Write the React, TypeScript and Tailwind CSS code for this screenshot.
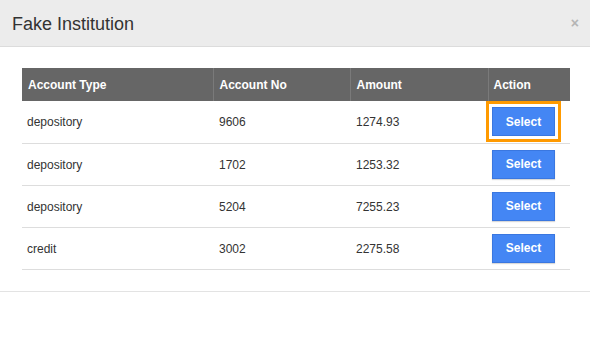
const accounts = [
  { type: "depository", no: "9606", amount: "1274.93", focused: true },
  { type: "depository", no: "1702", amount: "1253.32" },
  { type: "depository", no: "5204", amount: "7255.23" },
  { type: "credit", no: "3002", amount: "2275.58" },
];

export default function App() {
  return (
    <div className="w-[590px] h-[339px] bg-white font-['Liberation_Sans',Arial,sans-serif] text-[#333]">
      <div className="h-[47px] bg-[#ececec] border-b border-[#dcdcdc] flex items-center justify-between pl-3 pr-[11px]">
        <h4 className="text-[18px] leading-none text-[#333] mt-[1px]">Fake Institution</h4>
        <button className="text-[14px] font-bold leading-none text-[#b5b5b5]">×</button>
      </div>

      <div className="px-[22px] pt-[21px] pb-[21px] border-b border-[#e3e3e3]">
        <table className="w-[548px] border-collapse table-fixed text-[12px]">
          <colgroup>
            <col className="w-[191px]" />
            <col className="w-[137px]" />
            <col className="w-[138px]" />
            <col className="w-[82px]" />
          </colgroup>
          <thead>
            <tr className="h-[33px] bg-[#666] text-white font-bold text-left">
              <th className="px-[6px] font-bold">Account Type</th>
              <th className="px-[6px] font-bold border-l border-[#7a7a7a]">Account No</th>
              <th className="px-[6px] font-bold border-l border-[#7a7a7a]">Amount</th>
              <th className="pl-[5px] font-bold border-l border-[#7a7a7a]">Action</th>
            </tr>
          </thead>
          <tbody>
            {accounts.map((a) => (
              <tr key={a.no} className="h-[42px] border-b border-[#dddddd]">
                <td className="px-[5px] pt-[1px]">{a.type}</td>
                <td className="px-[6px] pt-[1px]">{a.no}</td>
                <td className="px-[6px] pt-[1px]">{a.amount}</td>
                <td className="pl-[4px]">
                  <button
                    className={
                      a.focused
                        ? "w-[63px] h-[29px] bg-[#4486f4] border border-[#3a77e0] text-white font-bold text-[12px] shadow-[0_0_0_3px_#fff,0_0_0_6px_#ff9a00]"
                        : "w-[63px] h-[29px] bg-[#4486f4] border border-[#3a77e0] text-white font-bold text-[12px] shadow-[0_1px_1px_rgba(0,0,0,0.15)]"
                    }
                  >
                    Select
                  </button>
                </td>
              </tr>
            ))}
          </tbody>
        </table>
      </div>
    </div>
  );
}
